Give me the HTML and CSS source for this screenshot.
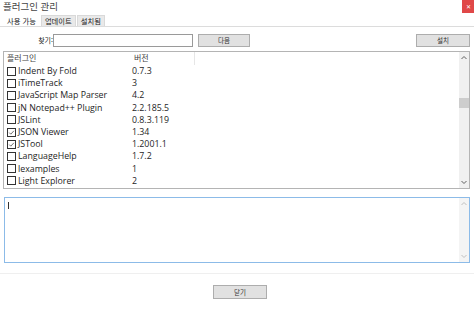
FILE: index.html
```html
<!DOCTYPE html>
<html lang="ko">
<head>
<meta charset="utf-8">
<link rel="stylesheet" href="styles.css">
</head>
<body>
<div class="win">
  <div class="titlebar">
    <span class="title">플러그인 관리</span>
    <span class="close">✕</span>
  </div>
  <div class="tabs">
    <span class="tab active">사용 가능</span>
    <span class="tab">업데이트</span>
    <span class="tab">설치됨</span>
  </div>
  <div class="panel">
    <div class="search">
      <span class="label">찾기:</span>
      <span class="input"></span>
      <span class="btn next">다음</span>
      <span class="spacer"></span>
      <span class="btn install">설치</span>
    </div>
    <div class="list">
      <div class="listmain">
        <div class="head">
          <span class="c1">플러그인</span>
          <span class="c2">버전</span>
        </div>
        <div class="row"><span class="cb"></span><span class="name">Indent By Fold</span><span class="ver">0.7.3</span></div>
        <div class="row"><span class="cb"></span><span class="name">iTimeTrack</span><span class="ver">3</span></div>
        <div class="row"><span class="cb"></span><span class="name">JavaScript Map Parser</span><span class="ver">4.2</span></div>
        <div class="row"><span class="cb"></span><span class="name">jN Notepad++ Plugin</span><span class="ver">2.2.185.5</span></div>
        <div class="row"><span class="cb"></span><span class="name">JSLint</span><span class="ver">0.8.3.119</span></div>
        <div class="row"><span class="cb checked"><svg viewBox="0 0 10 10"><path d="M1.8 5.2 L4 7.4 L8.4 2.6" fill="none" stroke="#333" stroke-width="1"/></svg></span><span class="name">JSON Viewer</span><span class="ver">1.34</span></div>
        <div class="row"><span class="cb checked"><svg viewBox="0 0 10 10"><path d="M1.8 5.2 L4 7.4 L8.4 2.6" fill="none" stroke="#333" stroke-width="1"/></svg></span><span class="name">JSTool</span><span class="ver">1.2001.1</span></div>
        <div class="row"><span class="cb"></span><span class="name">LanguageHelp</span><span class="ver">1.7.2</span></div>
        <div class="row"><span class="cb"></span><span class="name">lexamples</span><span class="ver">1</span></div>
        <div class="row"><span class="cb"></span><span class="name">Light Explorer</span><span class="ver">2</span></div>
      </div>
      <div class="vscroll">
        <svg class="arr" viewBox="0 0 10 10"><path d="M2.5 6 L5 3.5 L7.5 6" fill="none" stroke="#606060" stroke-width="1"/></svg>
        <div class="track"><div class="thumb"></div></div>
        <svg class="arr" viewBox="0 0 10 10"><path d="M2.5 4 L5 6.5 L7.5 4" fill="none" stroke="#606060" stroke-width="1"/></svg>
      </div>
    </div>
    <div class="desc">
      <div class="descmain"><span class="caret"></span></div>
      <div class="vscroll light">
        <svg class="arr" viewBox="0 0 10 10"><path d="M2.5 6 L5 3.5 L7.5 6" fill="none" stroke="#c0c0c0" stroke-width="1"/></svg>
        <div class="track"></div>
        <svg class="arr" viewBox="0 0 10 10"><path d="M2.5 4 L5 6.5 L7.5 4" fill="none" stroke="#c0c0c0" stroke-width="1"/></svg>
      </div>
    </div>
  </div>
  <div class="footer">
    <span class="btn closebtn">닫기</span>
  </div>
</div>
</body>
</html>
```
FILE: styles.css
```css
* { box-sizing: border-box; }
html, body { margin: 0; padding: 0; background: #fff; }
body {
  width: 474px; height: 314px; overflow: hidden;
  font-family: "Noto Sans CJK KR", "Noto Sans", sans-serif;
  color: #1a1a1a;
}
.win { width: 474px; height: 314px; display: flex; flex-direction: column; }
.titlebar {
  height: 14px; display: flex; align-items: flex-start; justify-content: space-between;
}
.title { font-size: 9.5px; line-height: 13px; padding-left: 3px; color: #444; }
.close {
  width: 12px; height: 13px; background: #e04848; color: #fff;
  font-size: 6px; line-height: 13px; text-align: center;
}
.tabs { height: 12px; display: flex; padding-left: 3px; align-items: flex-end; }
.tab {
  font-size: 7.3px; line-height: 11px; height: 11px; padding: 0 3px;
  background: #e9e9e9; border: 1px solid #d9d9d9; border-bottom: none; margin-right: 1px;
  color: #222;
}
.tab.active { background: #fff; border-color: #fff; height: 12px; line-height: 12px; }
.panel {
  border-top: 1px solid #dcdcdc; padding: 6px 4px 0 3px;
  display: flex; flex-direction: column;
}
.search { display: flex; align-items: center; height: 14px; }
.label { width: 50px; text-align: right; font-size: 7px; color: #222; }
.input { width: 140px; height: 13px; border: 1px solid #9a9a9a; background: #fff; }
.btn {
  height: 13px; background: #e1e1e1; border: 1px solid #adadad;
  font-size: 6.5px; line-height: 11px; text-align: center; color: #333;
}
.next { width: 52px; margin-left: 5px; }
.spacer { flex: 1; }
.install { width: 54px; }
.list {
  margin-top: 4px; height: 138px; border: 1px solid #b4b4b4; display: flex;
}
.listmain { flex: 1; position: relative; font-family: "Open Sans", "Noto Sans", sans-serif; }
.head {
  height: 13px; display: flex; font-family: "Noto Sans CJK KR", sans-serif;
  font-size: 8px; line-height: 12px; color: #444;
}
.head .c1 { width: 129px; padding-left: 3px; }
.head .c2 { width: 62px; padding-left: 1px; border-right: 1px solid #e6e6e6; }
.row { height: 12.2px; display: flex; align-items: center; font-size: 8.8px; color: #1e1e1e; }
.cb {
  width: 9px; height: 9px; border: 1px solid #333; margin-left: 3px; margin-right: 2px;
  background: #fff; flex: none; display: flex;
}
.cb svg { width: 7px; height: 7px; }
.name { width: 114px; white-space: nowrap; }
.ver { padding-left: 0px; }
.vscroll { width: 10px; background: #f0f0f0; display: flex; flex-direction: column; }
.arr { width: 10px; height: 12px; flex: none; }
.track { flex: 1; position: relative; }
.thumb { margin-top: 34px; height: 10px; background: #cdcdcd; }
.desc {
  margin-top: 8px; height: 66px; border: 1px solid #8cbbe8; margin-left: 1px; display: flex;
}
.descmain { flex: 1; padding: 4px 0 0 3px; }
.caret { display: block; width: 1px; height: 7px; background: #333; }
.vscroll.light { background: #f4f4f4; }
.footer {
  margin-top: 10px; border-top: 1px solid #efefef; display: flex; justify-content: center;
  padding-top: 11px; padding-left: 6px;
}
.closebtn { width: 54px; height: 14px; line-height: 12px; }
```
